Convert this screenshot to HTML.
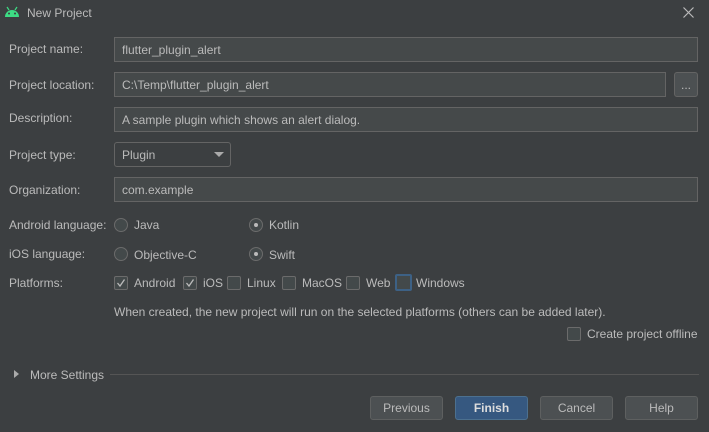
<!DOCTYPE html><html><head><style>
body{margin:0;width:709px;height:432px;background:#3c3f41;font-family:"Liberation Sans",sans-serif;font-size:12px;color:#bbbbbb;position:relative;overflow:hidden}
.a{position:absolute;white-space:nowrap}
.f{position:absolute;background:#45494a;border:1px solid #646464;box-sizing:border-box;height:25px;line-height:24px;padding-left:7px;color:#bbbbbb}
.lbl{position:absolute;left:9px}
.r{position:absolute;width:14px;height:14px;border-radius:50%;border:1px solid #6b6b6b;background:#43494a;box-sizing:border-box}
.r.on:after{content:"";position:absolute;left:4px;top:4px;width:4px;height:4px;border-radius:50%;background:#bbb}
.c{position:absolute;width:14px;height:14px;border:1px solid #6b6b6b;background:#43494a;box-sizing:border-box;border-radius:2px}
.b{position:absolute;top:396px;width:73px;height:24px;box-sizing:border-box;border:1px solid #5e6060;border-radius:3px;background:#4c5052;text-align:center;line-height:22px}
</style></head><body>
<svg class="a" style="left:4px;top:6px" width="16" height="12" viewBox="0 0 16 12"><path d="M1 11 A7 7 0 0 1 15 11 Z" fill="#3ddc84"/><circle cx="5" cy="7.5" r="1" fill="#3c3f41"/><circle cx="11" cy="7.5" r="1" fill="#3c3f41"/><path d="M3 1 L5 4 M13 1 L11 4" stroke="#3ddc84" stroke-width="1.2"/></svg>
<div class="a" style="left:27px;top:6px">New Project</div>
<svg class="a" style="left:683px;top:7px" width="11" height="11" viewBox="0 0 11 11"><path d="M0.5 0.5 L10.5 10.5 M10.5 0.5 L0.5 10.5" stroke="#bbb" stroke-width="1.2"/></svg>

<div class="lbl a" style="top:42px">Project name:</div><div class="f" style="left:114px;top:37px;width:584px">flutter_plugin_alert</div>
<div class="lbl a" style="top:78px">Project location:</div><div class="f" style="left:114px;top:72px;width:552px">C:\Temp\flutter_plugin_alert</div>
<div class="f" style="left:674px;top:72px;width:24px;padding:0;text-align:center;background:#4c5052;border-radius:3px">...</div>
<div class="lbl a" style="top:111px">Description:</div><div class="f" style="left:114px;top:107px;width:584px">A sample plugin which shows an alert dialog.</div>
<div class="lbl a" style="top:148px">Project type:</div><div class="f" style="left:114px;top:142px;width:117px;border-radius:3px;background:#3c3f41">Plugin<span style="position:absolute;left:99px;top:9px;border-left:5px solid transparent;border-right:5px solid transparent;border-top:5px solid #aaa"></span></div>
<div class="lbl a" style="top:183px">Organization:</div><div class="f" style="left:114px;top:177px;width:584px">com.example</div>

<div class="lbl a" style="top:218px">Android language:</div>
<div class="r" style="left:114px;top:218px"></div><div class="a" style="left:134px;top:218px">Java</div>
<div class="r on" style="left:249px;top:218px"></div><div class="a" style="left:269px;top:218px">Kotlin</div>
<div class="lbl a" style="top:247px">iOS language:</div>
<div class="r" style="left:114px;top:247px"></div><div class="a" style="left:134px;top:248px">Objective-C</div>
<div class="r on" style="left:249px;top:247px"></div><div class="a" style="left:269px;top:248px">Swift</div>

<div class="lbl a" style="top:276px">Platforms:</div>
<div class="c" style="left:114px;top:276px"></div><svg class="a" style="left:114px;top:276px" width="14" height="14"><path d="M3.5 7 L6 10 L10.5 3.5" stroke="#bbb" stroke-width="1.3" fill="none"/></svg><div class="a" style="left:134px;top:276px">Android</div>
<div class="c" style="left:183px;top:276px"></div><svg class="a" style="left:183px;top:276px" width="14" height="14"><path d="M3.5 7 L6 10 L10.5 3.5" stroke="#bbb" stroke-width="1.3" fill="none"/></svg><div class="a" style="left:203px;top:276px">iOS</div>
<div class="c" style="left:227px;top:276px"></div><div class="a" style="left:247px;top:276px">Linux</div>
<div class="c" style="left:282px;top:276px"></div><div class="a" style="left:302px;top:276px">MacOS</div>
<div class="c" style="left:346px;top:276px"></div><div class="a" style="left:366px;top:276px">Web</div>
<div class="c" style="left:395px;top:274px;width:17px;height:17px;border:2px solid #3d6185"></div><div class="a" style="left:416px;top:276px">Windows</div>

<div class="a" style="left:114px;top:305px">When created, the new project will run on the selected platforms (others can be added later).</div>
<div class="c" style="left:567px;top:327px"></div><div class="a" style="left:587px;top:327px">Create project offline</div>

<div class="a" style="left:14px;top:370px;border-top:4px solid transparent;border-bottom:4px solid transparent;border-left:5px solid #aaa"></div>
<div class="a" style="left:30px;top:368px">More Settings</div>
<div class="a" style="left:110px;top:374px;width:589px;height:1px;background:#555"></div>

<div class="b" style="left:370px">Previous</div>
<div class="b" style="left:455px;background:#365880;border-color:#4c708f;color:#ddd;font-weight:bold">Finish</div>
<div class="b" style="left:540px">Cancel</div>
<div class="b" style="left:625px">Help</div>
</body></html>
